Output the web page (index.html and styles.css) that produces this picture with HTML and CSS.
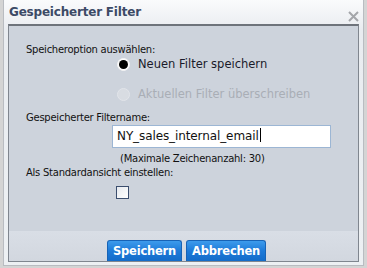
FILE: index.html
```html
<!DOCTYPE html>
<html lang="de">
<head>
  <meta charset="UTF-8" />
  <title>Gespeicherter Filter</title>
  <link rel="stylesheet" href="styles.css">
</head>
<body>
  <div class="window">
    <div class="titlebar">
      <span class="title">Gespeicherter Filter</span>
      <svg class="close" width="11" height="11" viewBox="0 0 11 11">
        <path d="M1 1 L10 10 M10 1 L1 10" stroke="#a4a6aa" stroke-width="2" fill="none"/>
      </svg>
    </div>
    <div class="panel">
      <div class="content">
        <div class="label">Speicheroption auswählen:</div>
        <label class="option">
          <span class="radio checked"></span> Neuen Filter speichern
        </label>
        <label class="option disabled">
          <span class="radio"></span> Aktuellen Filter überschreiben
        </label>
        <div class="label name">Gespeicherter Filtername:</div>
        <div class="field">NY_sales_internal_email<span class="caret"></span></div>
        <div class="hint">(Maximale Zeichenanzahl: 30)</div>
        <div class="label">Als Standardansicht einstellen:</div>
        <span class="checkbox"></span>
      </div>
      <div class="footer">
        <button class="btn">Speichern</button>
        <button class="btn">Abbrechen</button>
      </div>
    </div>
  </div>
</body>
</html>
```

FILE: styles.css
```css
body {
  margin: 0;
  background: #d4d4d4;
  font-family: "DejaVu Sans", Verdana, sans-serif;
}
.window {
  width: 361px;
  height: 266px;
  margin-left: 3px;
  box-sizing: border-box;
  border-left: 1px solid #b9bcc1;
  border-right: 1px solid #b9bcc1;
  border-bottom: 1px solid #b9bcc1;
  background: linear-gradient(#fafbfc, #e9ecf0 30px, #edf0f3);
  padding: 0 4px 3px 4px;
  display: flex;
  flex-direction: column;
}
.titlebar {
  height: 24px;
  display: flex;
  align-items: center;
  justify-content: space-between;
  padding: 0 0 0 1px;
}
.title {
  font-weight: bold;
  font-size: 12px;
  color: #3c4a66;
  letter-spacing: -0.2px;
  margin-top: -1px;
}
.close {
  margin: 8px 0 0 0;
}
.panel {
  flex: 1;
  border: 1px solid #80868f;
  border-top: 2px solid #6e737b;
  background: #cdd3dc;
  display: flex;
  flex-direction: column;
}
.content {
  flex: 1;
  padding: 17px 0 0 17px;
  font-size: 10px;
  color: #111;
}
.label {
  height: 14px;
  line-height: 14px;
  letter-spacing: -0.25px;
}
.label.name {
  margin-top: 10px;
}
.option {
  display: flex;
  align-items: center;
  height: 14px;
  padding-left: 91px;
  font-size: 11.5px;
  color: #1a1a2a;
}
.option.disabled {
  color: #a9aeb6;
  margin-top: 16px;
}
.radio {
  width: 11px;
  height: 11px;
  border-radius: 50%;
  background: #fff;
  border: 1px solid #bfc3c9;
  margin-right: 8px;
  position: relative;
}
.radio.checked {
  border-color: #f4f4f4;
}
.radio.checked::after {
  content: "";
  position: absolute;
  left: 1px;
  top: 1px;
  width: 9px;
  height: 9px;
  border-radius: 50%;
  background: #000;
}
.option.disabled .radio {
  background: #d8dce2;
  border-color: #e2e5ea;
}
.field {
  margin-left: 86px;
  width: 213px;
  height: 21px;
  border: 1px solid #9cb6d4;
  background: #fff;
  font-size: 12px;
  line-height: 21px;
  padding-left: 4px;
  color: #111;
  letter-spacing: -0.1px;
}
.caret {
  display: inline-block;
  width: 1px;
  height: 14px;
  background: #000;
  vertical-align: -2px;
  margin-left: 1px;
}
.hint {
  margin: 4px 0 0 94px;
  height: 14px;
  line-height: 14px;
  letter-spacing: -0.25px;
}
.checkbox {
  display: block;
  width: 11px;
  height: 11px;
  margin: 6px 0 0 90px;
  border: 1px solid #3b4e6e;
  background: linear-gradient(135deg, #e6e9ee, #fff);
}
.footer {
  height: 30px;
  background: linear-gradient(#d9dee6, #d2d7df);
  display: flex;
  justify-content: center;
  align-items: flex-end;
  gap: 4px;
  padding-left: 6px;
}
.btn {
  font-family: "DejaVu Sans", Verdana, sans-serif;
  font-weight: bold;
  font-size: 11.5px;
  color: #fff;
  border: 1px solid #1763b6;
  border-bottom: none;
  border-radius: 3px 3px 0 0;
  background: linear-gradient(#3d9bec, #1d7ad8 50%, #136cc9);
  height: 21px;
  padding: 0 5px;
  letter-spacing: -0.2px;
}
```
